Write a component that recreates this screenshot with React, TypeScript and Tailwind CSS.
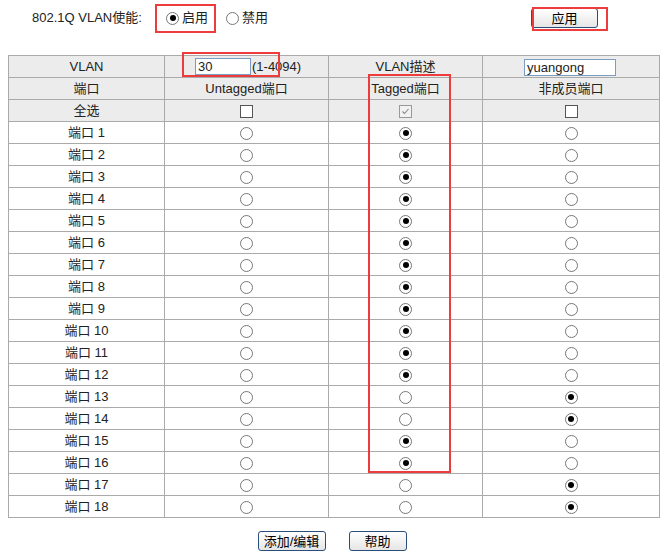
import React from "react";

const Radio = ({ on }: { on?: boolean }) => (
  <span className="inline-flex w-[13px] h-[13px] rounded-full border border-[#777] bg-white items-center justify-center align-middle">
    {on && <span className="w-[6px] h-[6px] rounded-full bg-black" />}
  </span>
);
const Box = ({ on }: { on?: boolean }) => (
  <span className={`inline-flex w-[13px] h-[13px] border ${on ? "border-[#999] bg-[#f2f2f2]" : "border-[#555] bg-white"} items-center justify-center align-middle`}>
    {on && (
      <svg width="9" height="9" viewBox="0 0 9 9"><path d="M1.5 4.5 L3.5 6.5 L7.5 2" stroke="#888" strokeWidth="1.1" fill="none" /></svg>
    )}
  </span>
);
const Btn = ({ children, w }: { children: React.ReactNode; w: string }) => (
  <button className={`${w} h-[20px] border border-[#2a4d7a] rounded-[3px] bg-gradient-to-b from-white to-[#e6e6e6] text-[13px] text-black leading-none`}>{children}</button>
);

export default function App() {
  const nonMember = [13, 14, 17, 18];
  const rows = Array.from({ length: 18 }, (_, i) => i + 1);
  const td = "border border-[#aaa] text-center h-[22px] p-0";
  return (
    <div className="relative w-[666px] h-[553px] bg-white text-[13px] text-[#222]" style={{ fontFamily: '"Liberation Sans", Arial, "Noto Sans CJK SC", sans-serif' }}>
      <div className="flex items-center h-[36px] pl-[32px]">
        <span className="w-[134px]">802.1Q VLAN使能:</span>
        <Radio on /><span className="ml-[3px] mr-[18px]">启用</span>
        <Radio /><span className="ml-[3px]">禁用</span>
        <div className="ml-[263px]"><Btn w="w-[67px]">应用</Btn></div>
      </div>
      <table className="ml-[8px] mt-[19px] w-[651px] border-collapse table-fixed">
        <colgroup><col className="w-[156px]" /><col className="w-[164px]" /><col className="w-[154px]" /><col className="w-[177px]" /></colgroup>
        <tbody>
          <tr className="bg-[#ececec]">
            <td className={td}>VLAN</td>
            <td className={`${td} text-left pl-[30px]`}>
              <span className="inline-block w-[56px] h-[17px] border border-[#7a9cc0] bg-white px-[2px] leading-[16px] align-middle">30</span>
              <span className="ml-[1px] align-middle">(1-4094)</span>
            </td>
            <td className={td}>VLAN描述</td>
            <td className={`${td} text-left pl-[41px]`}>
              <span className="inline-block w-[92px] h-[17px] border border-[#7a9cc0] bg-white px-[2px] leading-[16px] align-middle">yuangong</span>
            </td>
          </tr>
          <tr className="bg-[#ececec]">
            <td className={td}>端口</td><td className={td}>Untagged端口</td><td className={td}>Tagged端口</td><td className={td}>非成员端口</td>
          </tr>
          <tr className="bg-[#ececec]">
            <td className={td}>全选</td><td className={td}><Box /></td><td className={td}><Box on /></td><td className={td}><Box /></td>
          </tr>
          {rows.map((r) => {
            const nm = nonMember.includes(r);
            return (
              <tr key={r}>
                <td className={td}>端口 {r}</td>
                <td className={td}><Radio /></td>
                <td className={td}><Radio on={!nm} /></td>
                <td className={td}><Radio on={nm} /></td>
              </tr>
            );
          })}
        </tbody>
      </table>
      <div className="flex justify-center gap-[23px] mt-[13px] pr-[2px]">
        <Btn w="w-[68px]">添加/编辑</Btn>
        <Btn w="w-[58px]">帮助</Btn>
      </div>
      <div className="absolute left-[155px] top-[4px] w-[61px] h-[29px] border-2 border-[#ee3b3b]" />
      <div className="absolute left-[532px] top-[7px] w-[76px] h-[24px] border-2 border-[#ee3b3b]" />
      <div className="absolute left-[182px] top-[52px] w-[98px] h-[25px] border-2 border-[#ee3b3b]" />
      <div className="absolute left-[368px] top-[74px] w-[83px] h-[399px] border-2 border-[#ee3b3b]" />
    </div>
  );
}
